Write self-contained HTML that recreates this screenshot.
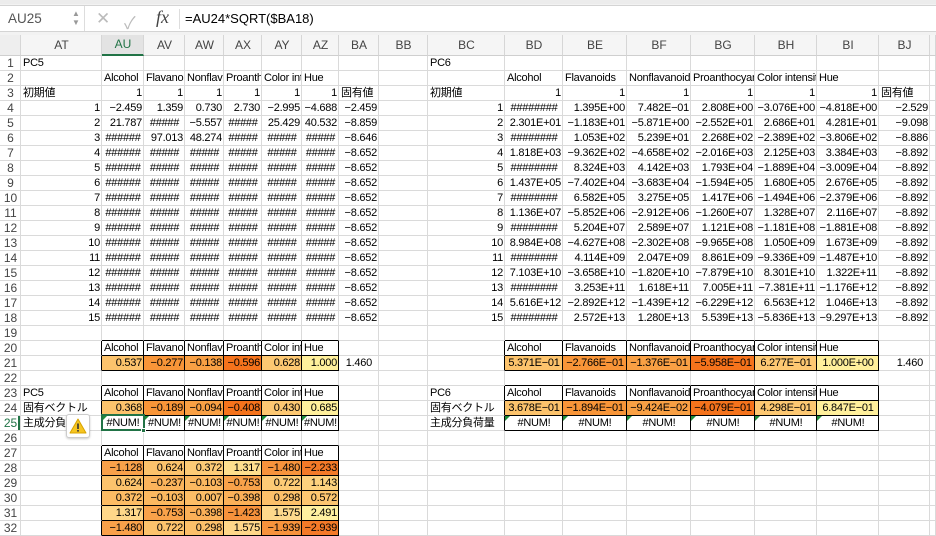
<!DOCTYPE html>
<html><head><meta charset="utf-8"><style>
*{margin:0;padding:0;box-sizing:border-box}
body{width:936px;height:525px;overflow:hidden;background:#fff;font-family:"Liberation Sans","Noto Sans CJK JP",sans-serif;font-size:11px;color:#000;position:relative}
#top{position:absolute;left:0;top:0;width:936px;height:35px;background:#f2f2f2;border-top:4px solid #ececec}
#fb{position:absolute;left:0;top:5px;width:936px;height:27px;background:#fff;border-top:1px solid #d4d4d4;border-bottom:1px solid #d4d4d4}
table{position:absolute;left:0;top:35px;border-collapse:separate;border-spacing:0;table-layout:fixed;width:936px}
td,th{height:15px;line-height:14px;padding:0 1px 0 2px;overflow:hidden;white-space:nowrap;border-right:1px solid #dadada;border-bottom:1px solid #dadada;font-weight:normal;text-align:left}
td{letter-spacing:-0.25px}
th{color:#444;text-align:center;background:#fff;font-size:12px}
tr.hd td{height:20px;line-height:19px;background:#f5f5f5;color:#444;text-align:center;font-size:12px;letter-spacing:0;border-bottom:1px solid #cfcfcf;border-right:1px solid #d6d6d6}
.n{text-align:right}.c{text-align:center}
.k{border-right-color:#000!important;border-bottom-color:#000!important}
.r{border-right-color:#000!important}.b{border-bottom-color:#000!important}
.e{position:relative}
.e::before{content:"";position:absolute;left:0;top:0;border-top:5px solid #1f8c3b;border-right:5px solid transparent}
.c1{background:#fcc36c}.c2{background:#f89538}.c3{background:#f9a044}.c4{background:#f5731c}.c5{background:#fdc872}.c6{background:#fff09c}
</style></head><body>
<div id="top"></div>
<div id="fb">
 <div style="position:absolute;left:8px;top:5px;color:#555;font-size:13.5px">AU25</div>
 <div style="position:absolute;left:72px;top:3px;color:#999;font-size:8px;line-height:9px">▲<br>▼</div>
 <div style="position:absolute;left:84px;top:0;width:1px;height:25px;background:#ddd"></div>
 <div style="position:absolute;left:96px;top:3px;color:#bbb;font-size:17px">✕</div>
 <div style="position:absolute;left:124px;top:3px;color:#bbb;font-size:17px">✓</div>
 <div style="position:absolute;left:156px;top:1px;color:#444;font-size:18px;font-style:italic;font-family:'Liberation Serif',serif">fx</div>
 <div style="position:absolute;left:179px;top:3px;width:1px;height:20px;background:#ddd"></div>
 <div style="position:absolute;left:185px;top:5px;font-size:13px">=AU24*SQRT($BA18)</div>
</div>
<table>
<colgroup><col style="width:21px"><col style="width:81px"><col style="width:42px"><col style="width:41px"><col style="width:39px"><col style="width:38px"><col style="width:40px"><col style="width:37px"><col style="width:40px"><col style="width:49px"><col style="width:77px"><col style="width:58px"><col style="width:64px"><col style="width:64px"><col style="width:64px"><col style="width:62px"><col style="width:62px"><col style="width:51px"><col style="width:6px"></colgroup>
<tr class="hd"><td style="background:#eee"></td><td>AT</td><td style="color:#217346;background:#e3e3e3;border-bottom:2px solid #217346">AU</td><td>AV</td><td>AW</td><td>AX</td><td>AY</td><td>AZ</td><td>BA</td><td>BB</td><td>BC</td><td>BD</td><td>BE</td><td>BF</td><td>BG</td><td>BH</td><td>BI</td><td>BJ</td><td></td></tr>
<tr><th>1</th><td>PC5</td><td></td><td></td><td></td><td></td><td></td><td></td><td></td><td></td><td>PC6</td><td></td><td></td><td></td><td></td><td></td><td></td><td></td><td></td></tr>
<tr><th>2</th><td></td><td>Alcohol</td><td>Flavanoids</td><td>Nonflavanoid</td><td>Proanthocyanins</td><td>Color intensity</td><td>Hue</td><td></td><td></td><td></td><td>Alcohol</td><td>Flavanoids</td><td>Nonflavanoid</td><td>Proanthocyanins</td><td>Color intensity</td><td>Hue</td><td></td><td></td></tr>
<tr><th>3</th><td>初期値</td><td class="n">1</td><td class="n">1</td><td class="n">1</td><td class="n">1</td><td class="n">1</td><td class="n">1</td><td>固有値</td><td></td><td>初期値</td><td class="n">1</td><td class="n">1</td><td class="n">1</td><td class="n">1</td><td class="n">1</td><td class="n">1</td><td>固有値</td><td></td></tr>
<tr><th>4</th><td class="n">1</td><td class="n">−2.459</td><td class="n">1.359</td><td class="n">0.730</td><td class="n">2.730</td><td class="n">−2.995</td><td class="n">−4.688</td><td class="n">−2.459</td><td></td><td class="n">1</td><td class="c">########</td><td class="n">1.395E+00</td><td class="n">7.482E−01</td><td class="n">2.808E+00</td><td class="n">−3.076E+00</td><td class="n">−4.818E+00</td><td class="n">−2.529</td><td></td></tr>
<tr><th>5</th><td class="n">2</td><td class="n">21.787</td><td class="c">#####</td><td class="n">−5.557</td><td class="c">#####</td><td class="n">25.429</td><td class="n">40.532</td><td class="n">−8.859</td><td></td><td class="n">2</td><td class="n">2.301E+01</td><td class="n">−1.183E+01</td><td class="n">−5.871E+00</td><td class="n">−2.552E+01</td><td class="n">2.686E+01</td><td class="n">4.281E+01</td><td class="n">−9.098</td><td></td></tr>
<tr><th>6</th><td class="n">3</td><td class="c">######</td><td class="n">97.013</td><td class="n">48.274</td><td class="c">#####</td><td class="c">#####</td><td class="c">#####</td><td class="n">−8.646</td><td></td><td class="n">3</td><td class="c">########</td><td class="n">1.053E+02</td><td class="n">5.239E+01</td><td class="n">2.268E+02</td><td class="n">−2.389E+02</td><td class="n">−3.806E+02</td><td class="n">−8.886</td><td></td></tr>
<tr><th>7</th><td class="n">4</td><td class="c">######</td><td class="c">#####</td><td class="c">#####</td><td class="c">#####</td><td class="c">#####</td><td class="c">#####</td><td class="n">−8.652</td><td></td><td class="n">4</td><td class="n">1.818E+03</td><td class="n">−9.362E+02</td><td class="n">−4.658E+02</td><td class="n">−2.016E+03</td><td class="n">2.125E+03</td><td class="n">3.384E+03</td><td class="n">−8.892</td><td></td></tr>
<tr><th>8</th><td class="n">5</td><td class="c">######</td><td class="c">#####</td><td class="c">#####</td><td class="c">#####</td><td class="c">#####</td><td class="c">#####</td><td class="n">−8.652</td><td></td><td class="n">5</td><td class="c">########</td><td class="n">8.324E+03</td><td class="n">4.142E+03</td><td class="n">1.793E+04</td><td class="n">−1.889E+04</td><td class="n">−3.009E+04</td><td class="n">−8.892</td><td></td></tr>
<tr><th>9</th><td class="n">6</td><td class="c">######</td><td class="c">#####</td><td class="c">#####</td><td class="c">#####</td><td class="c">#####</td><td class="c">#####</td><td class="n">−8.652</td><td></td><td class="n">6</td><td class="n">1.437E+05</td><td class="n">−7.402E+04</td><td class="n">−3.683E+04</td><td class="n">−1.594E+05</td><td class="n">1.680E+05</td><td class="n">2.676E+05</td><td class="n">−8.892</td><td></td></tr>
<tr><th>10</th><td class="n">7</td><td class="c">######</td><td class="c">#####</td><td class="c">#####</td><td class="c">#####</td><td class="c">#####</td><td class="c">#####</td><td class="n">−8.652</td><td></td><td class="n">7</td><td class="c">########</td><td class="n">6.582E+05</td><td class="n">3.275E+05</td><td class="n">1.417E+06</td><td class="n">−1.494E+06</td><td class="n">−2.379E+06</td><td class="n">−8.892</td><td></td></tr>
<tr><th>11</th><td class="n">8</td><td class="c">######</td><td class="c">#####</td><td class="c">#####</td><td class="c">#####</td><td class="c">#####</td><td class="c">#####</td><td class="n">−8.652</td><td></td><td class="n">8</td><td class="n">1.136E+07</td><td class="n">−5.852E+06</td><td class="n">−2.912E+06</td><td class="n">−1.260E+07</td><td class="n">1.328E+07</td><td class="n">2.116E+07</td><td class="n">−8.892</td><td></td></tr>
<tr><th>12</th><td class="n">9</td><td class="c">######</td><td class="c">#####</td><td class="c">#####</td><td class="c">#####</td><td class="c">#####</td><td class="c">#####</td><td class="n">−8.652</td><td></td><td class="n">9</td><td class="c">########</td><td class="n">5.204E+07</td><td class="n">2.589E+07</td><td class="n">1.121E+08</td><td class="n">−1.181E+08</td><td class="n">−1.881E+08</td><td class="n">−8.892</td><td></td></tr>
<tr><th>13</th><td class="n">10</td><td class="c">######</td><td class="c">#####</td><td class="c">#####</td><td class="c">#####</td><td class="c">#####</td><td class="c">#####</td><td class="n">−8.652</td><td></td><td class="n">10</td><td class="n">8.984E+08</td><td class="n">−4.627E+08</td><td class="n">−2.302E+08</td><td class="n">−9.965E+08</td><td class="n">1.050E+09</td><td class="n">1.673E+09</td><td class="n">−8.892</td><td></td></tr>
<tr><th>14</th><td class="n">11</td><td class="c">######</td><td class="c">#####</td><td class="c">#####</td><td class="c">#####</td><td class="c">#####</td><td class="c">#####</td><td class="n">−8.652</td><td></td><td class="n">11</td><td class="c">########</td><td class="n">4.114E+09</td><td class="n">2.047E+09</td><td class="n">8.861E+09</td><td class="n">−9.336E+09</td><td class="n">−1.487E+10</td><td class="n">−8.892</td><td></td></tr>
<tr><th>15</th><td class="n">12</td><td class="c">######</td><td class="c">#####</td><td class="c">#####</td><td class="c">#####</td><td class="c">#####</td><td class="c">#####</td><td class="n">−8.652</td><td></td><td class="n">12</td><td class="n">7.103E+10</td><td class="n">−3.658E+10</td><td class="n">−1.820E+10</td><td class="n">−7.879E+10</td><td class="n">8.301E+10</td><td class="n">1.322E+11</td><td class="n">−8.892</td><td></td></tr>
<tr><th>16</th><td class="n">13</td><td class="c">######</td><td class="c">#####</td><td class="c">#####</td><td class="c">#####</td><td class="c">#####</td><td class="c">#####</td><td class="n">−8.652</td><td></td><td class="n">13</td><td class="c">########</td><td class="n">3.253E+11</td><td class="n">1.618E+11</td><td class="n">7.005E+11</td><td class="n">−7.381E+11</td><td class="n">−1.176E+12</td><td class="n">−8.892</td><td></td></tr>
<tr><th>17</th><td class="n">14</td><td class="c">######</td><td class="c">#####</td><td class="c">#####</td><td class="c">#####</td><td class="c">#####</td><td class="c">#####</td><td class="n">−8.652</td><td></td><td class="n">14</td><td class="n">5.616E+12</td><td class="n">−2.892E+12</td><td class="n">−1.439E+12</td><td class="n">−6.229E+12</td><td class="n">6.563E+12</td><td class="n">1.046E+13</td><td class="n">−8.892</td><td></td></tr>
<tr><th>18</th><td class="n">15</td><td class="c">######</td><td class="c">#####</td><td class="c">#####</td><td class="c">#####</td><td class="c">#####</td><td class="c">#####</td><td class="n">−8.652</td><td></td><td class="n">15</td><td class="c">########</td><td class="n">2.572E+13</td><td class="n">1.280E+13</td><td class="n">5.539E+13</td><td class="n">−5.836E+13</td><td class="n">−9.297E+13</td><td class="n">−8.892</td><td></td></tr>
<tr><th>19</th><td></td><td class="b"></td><td class="b"></td><td class="b"></td><td class="b"></td><td class="b"></td><td class="b"></td><td></td><td></td><td></td><td class="b"></td><td class="b"></td><td class="b"></td><td class="b"></td><td class="b"></td><td class="b"></td><td></td><td></td></tr>
<tr><th>20</th><td class="r"></td><td class="k">Alcohol</td><td class="k">Flavanoids</td><td class="k">Nonflavanoid</td><td class="k">Proanthocyanins</td><td class="k">Color intensity</td><td class="k">Hue</td><td></td><td></td><td class="r"></td><td class="k">Alcohol</td><td class="k">Flavanoids</td><td class="k">Nonflavanoid</td><td class="k">Proanthocyanins</td><td class="k">Color intensity</td><td class="k">Hue</td><td></td><td></td></tr>
<tr><th>21</th><td class="r"></td><td class="k n c1">0.537</td><td class="k n c2">−0.277</td><td class="k n c3">−0.138</td><td class="k n c4">−0.596</td><td class="k n c5">0.628</td><td class="k n c6">1.000</td><td class="n" style="padding-right:6px">1.460</td><td></td><td class="r"></td><td class="k c c1">5.371E−01</td><td class="k c c2">−2.766E−01</td><td class="k c c3">−1.376E−01</td><td class="k c c4">−5.958E−01</td><td class="k c c5">6.277E−01</td><td class="k c c6">1.000E+00</td><td class="n" style="padding-right:6px">1.460</td><td></td></tr>
<tr><th>22</th><td></td><td class="b"></td><td class="b"></td><td class="b"></td><td class="b"></td><td class="b"></td><td class="b"></td><td></td><td></td><td></td><td class="b"></td><td class="b"></td><td class="b"></td><td class="b"></td><td class="b"></td><td class="b"></td><td></td><td></td></tr>
<tr><th>23</th><td class="r">PC5</td><td class="k">Alcohol</td><td class="k">Flavanoids</td><td class="k">Nonflavanoid</td><td class="k">Proanthocyanins</td><td class="k">Color intensity</td><td class="k">Hue</td><td></td><td></td><td class="r">PC6</td><td class="k">Alcohol</td><td class="k">Flavanoids</td><td class="k">Nonflavanoid</td><td class="k">Proanthocyanins</td><td class="k">Color intensity</td><td class="k">Hue</td><td></td><td></td></tr>
<tr><th>24</th><td class="r">固有ベクトル</td><td class="k n c1">0.368</td><td class="k n c2">−0.189</td><td class="k n c3">−0.094</td><td class="k n c4">−0.408</td><td class="k n c5">0.430</td><td class="k n c6">0.685</td><td></td><td></td><td class="r">固有ベクトル</td><td class="k c c1">3.678E−01</td><td class="k c c2">−1.894E−01</td><td class="k c c3">−9.424E−02</td><td class="k c c4">−4.079E−01</td><td class="k c c5">4.298E−01</td><td class="k c c6">6.847E−01</td><td></td><td></td></tr>
<tr><th style="color:#217346;box-shadow:inset -2px 0 #217346">25</th><td class="r">主成分負荷量</td><td class="k c e">#NUM!</td><td class="k c e">#NUM!</td><td class="k c e">#NUM!</td><td class="k c e">#NUM!</td><td class="k c e">#NUM!</td><td class="k c e">#NUM!</td><td></td><td></td><td class="r">主成分負荷量</td><td class="k c e">#NUM!</td><td class="k c e">#NUM!</td><td class="k c e">#NUM!</td><td class="k c e">#NUM!</td><td class="k c e">#NUM!</td><td class="k c e">#NUM!</td><td></td><td></td></tr>
<tr><th>26</th><td></td><td class="b"></td><td class="b"></td><td class="b"></td><td class="b"></td><td class="b"></td><td class="b"></td><td></td><td></td><td></td><td></td><td></td><td></td><td></td><td></td><td></td><td></td><td></td></tr>
<tr><th>27</th><td class="r"></td><td class="k">Alcohol</td><td class="k">Flavanoids</td><td class="k">Nonflavanoid</td><td class="k">Proanthocyanins</td><td class="k">Color intensity</td><td class="k">Hue</td><td></td><td></td><td></td><td></td><td></td><td></td><td></td><td></td><td></td><td></td><td></td></tr>
<tr><th>28</th><td class="r"></td><td class="k n" style="background:#f9a14a">−1.128</td><td class="k n" style="background:#fcc36c">0.624</td><td class="k n" style="background:#fdcb76">0.372</td><td class="k n" style="background:#fedf8e">1.317</td><td class="k n" style="background:#f7933c">−1.480</td><td class="k n" style="background:#f47a28">−2.233</td><td></td><td></td><td></td><td></td><td></td><td></td><td></td><td></td><td></td><td></td><td></td></tr>
<tr><th>29</th><td class="r"></td><td class="k n" style="background:#fcc36c">0.624</td><td class="k n" style="background:#fbb45c">−0.237</td><td class="k n" style="background:#fbb860">−0.103</td><td class="k n" style="background:#f9a24a">−0.753</td><td class="k n" style="background:#fdcb76">0.722</td><td class="k n" style="background:#fdd27e">1.143</td><td></td><td></td><td></td><td></td><td></td><td></td><td></td><td></td><td></td><td></td><td></td></tr>
<tr><th>30</th><td class="r"></td><td class="k n" style="background:#fcbc64">0.372</td><td class="k n" style="background:#fbb860">−0.103</td><td class="k n" style="background:#fcbd66">0.007</td><td class="k n" style="background:#fbb058">−0.398</td><td class="k n" style="background:#fcc06a">0.298</td><td class="k n" style="background:#fdc670">0.572</td><td></td><td></td><td></td><td></td><td></td><td></td><td></td><td></td><td></td><td></td><td></td></tr>
<tr><th>31</th><td class="r"></td><td class="k n" style="background:#fed789">1.317</td><td class="k n" style="background:#f9a24a">−0.753</td><td class="k n" style="background:#fbb058">−0.398</td><td class="k n" style="background:#f7923c">−1.423</td><td class="k n" style="background:#fed98c">1.575</td><td class="k n" style="background:#fff1a0">2.491</td><td></td><td></td><td></td><td></td><td></td><td></td><td></td><td></td><td></td><td></td><td></td></tr>
<tr><th>32</th><td class="r"></td><td class="k n" style="background:#f9a14a">−1.480</td><td class="k n" style="background:#fcc36c">0.722</td><td class="k n" style="background:#fcc06a">0.298</td><td class="k n" style="background:#fed789">1.575</td><td class="k n" style="background:#f7933c">−1.939</td><td class="k n" style="background:#f47a28">−2.939</td><td></td><td></td><td></td><td></td><td></td><td></td><td></td><td></td><td></td><td></td><td></td></tr>
</table>
<div style="position:absolute;left:101px;top:414px;width:44px;height:17px;border:2px solid #217346"></div>
<div style="position:absolute;left:141px;top:428px;width:5px;height:5px;background:#217346;border:1px solid #fff"></div>
<div style="position:absolute;left:66px;top:414px;width:24px;height:24px;background:#fff;border:1px solid #ccc;border-radius:3px;box-shadow:0 1px 2px rgba(0,0,0,.2)">
<svg width="22" height="22" viewBox="0 0 22 22" style="position:absolute;left:0;top:0"><path d="M11 4 L19 18 L3 18 Z" fill="#f6c521" stroke="#d9a400" stroke-width="1" stroke-linejoin="round"/><rect x="10.2" y="8.5" width="1.6" height="5.5" fill="#333"/><rect x="10.2" y="15" width="1.6" height="1.6" fill="#333"/></svg>
</div>
</body></html>
